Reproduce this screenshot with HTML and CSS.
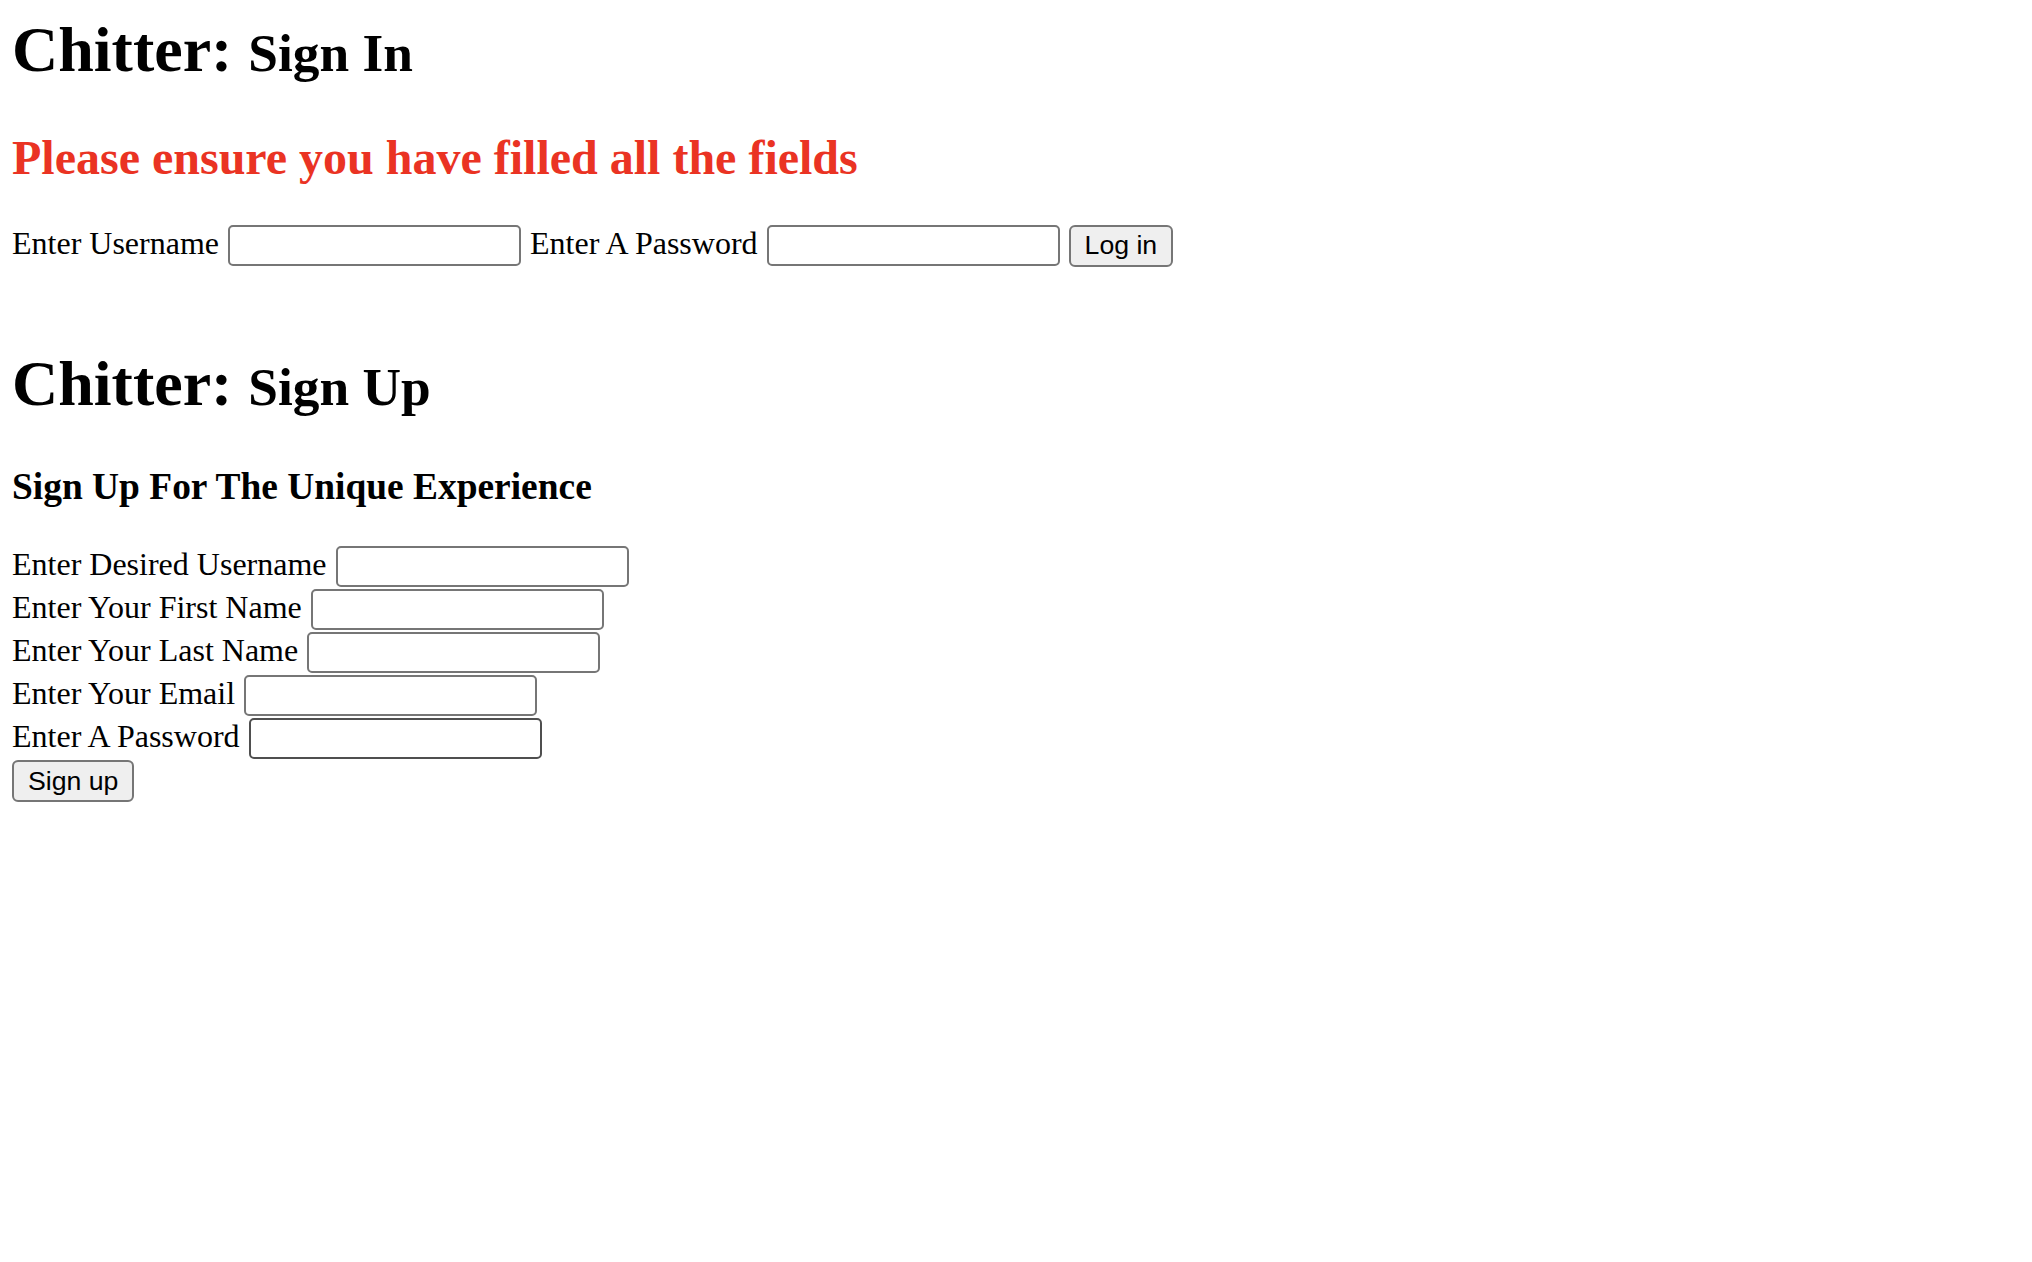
FILE: index.html
```html
<!DOCTYPE html>
<html lang="en">
<head>
<meta charset="utf-8">
<title>Chitter</title>
<link rel="stylesheet" href="styles.css">
</head>
<body class="page">
<h1 class="title">Chitter: <small class="title__sub">Sign In</small></h1>
<h2 class="alert">Please ensure you have filled all the fields</h2>
<form class="login">
<label class="label">Enter Username <input class="field" type="text"></label>
<label class="label">Enter A Password <input class="field" type="password"></label>
<button class="btn" type="button">Log in</button>
</form>
<h1 class="title title--signup">Chitter: <small class="title__sub">Sign Up</small></h1>
<h3 class="tagline">Sign Up For The Unique Experience</h3>
<form class="signup">
<label class="label">Enter Desired Username <input class="field" type="text"></label><br>
<label class="label">Enter Your First Name <input class="field" type="text"></label><br>
<label class="label">Enter Your Last Name <input class="field" type="text"></label><br>
<label class="label">Enter Your Email <input class="field" type="email"></label><br>
<label class="label">Enter A Password <input class="field field--hover" type="password"></label><br>
<button class="btn" type="button">Sign up</button>
</form>
</body>
</html>
```
FILE: styles.css
```css
html {
  background: #ffffff;
}

.page {
  margin: 0;
  padding: 12.5px 12px 0 12px;
  font-family: "Liberation Serif", "Times New Roman", Times, serif;
  font-size: 32px;
  line-height: normal;
  color: #000000;
}

.title {
  margin: 0;
  font-size: 64px;
  font-weight: bold;
  line-height: normal;
}

.title__sub {
  font-size: 53.33px;
  font-weight: bold;
}

.title--signup {
  margin-top: 79.5px;
}

.alert {
  margin: 43px 0 39.8px 0;
  font-size: 48px;
  font-weight: bold;
  line-height: normal;
  color: #ea3323;
}

.tagline {
  margin: 44.7px 0 37px 0;
  font-size: 37.44px;
  font-weight: bold;
  line-height: normal;
}

.login,
.signup {
  margin: 0;
  display: block;
}

.label {
  font-size: 32px;
}

.field {
  box-sizing: border-box;
  width: 293px;
  height: 41px;
  margin: 1px;
  padding: 0 4px;
  border: 2px solid #767676;
  border-radius: 5px;
  background: #ffffff;
  font-family: "Liberation Sans", Arial, sans-serif;
  font-size: 26.67px;
  vertical-align: baseline;
  outline: none;
}

.field--hover {
  border-color: #4f4f4f;
}

.btn {
  box-sizing: border-box;
  height: 42px;
  margin: 0;
  padding: 0 14px;
  border: 2px solid #767676;
  border-radius: 6px;
  background: #efefef;
  color: #000000;
  font-family: "Liberation Sans", Arial, sans-serif;
  font-size: 26.67px;
  vertical-align: baseline;
}
```
